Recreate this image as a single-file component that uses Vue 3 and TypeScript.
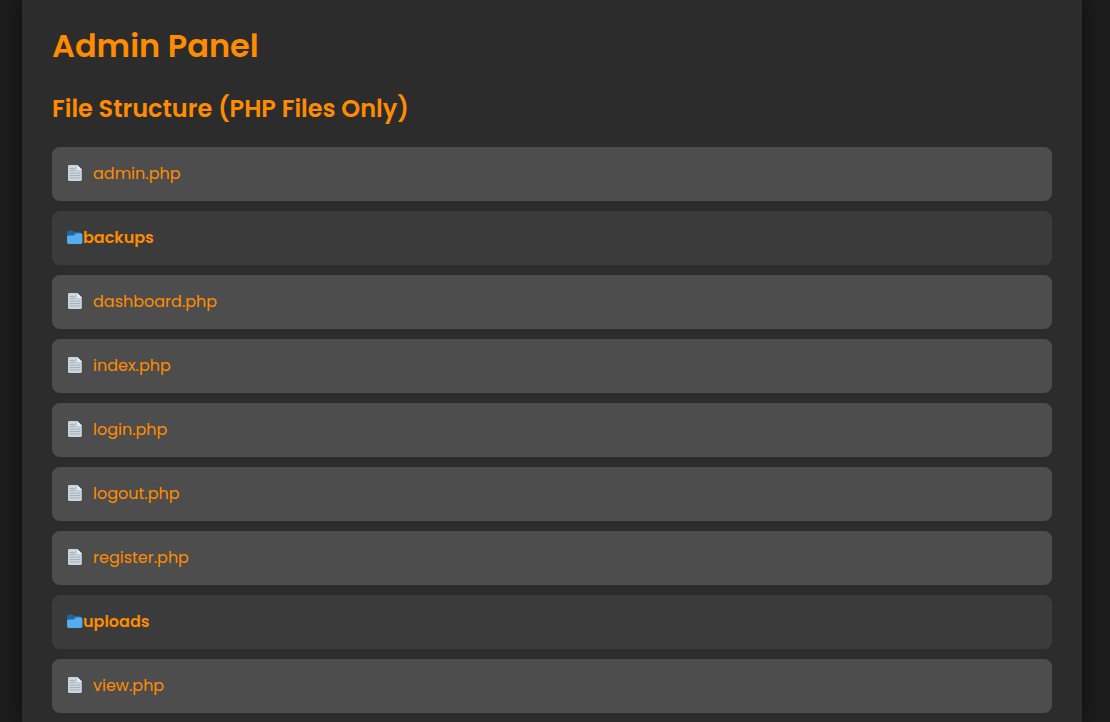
<script setup lang="ts">
interface Entry {
  name: string
  kind: 'file' | 'folder'
}

const entries: Entry[] = [
  { name: 'admin.php', kind: 'file' },
  { name: 'backups', kind: 'folder' },
  { name: 'dashboard.php', kind: 'file' },
  { name: 'index.php', kind: 'file' },
  { name: 'login.php', kind: 'file' },
  { name: 'logout.php', kind: 'file' },
  { name: 'register.php', kind: 'file' },
  { name: 'uploads', kind: 'folder' },
  { name: 'view.php', kind: 'file' },
]
</script>

<template>
  <div class="page">
    <main class="panel">
      <h1>Admin Panel</h1>
      <h2>File Structure (PHP Files Only)</h2>
      <ul class="tree">
        <li v-for="entry in entries" :key="entry.name" :class="['row', entry.kind]">
          <template v-if="entry.kind === 'file'">
            <svg class="icon" viewBox="0 0 16 20" aria-hidden="true">
              <path d="M2.3 1H10l4.8 4.8v9.9a1.3 1.3 0 0 1-1.3 1.3H2.3A1.3 1.3 0 0 1 1 15.700V2.3A1.300 1.300 0 0 1 2.3 1z" fill="#ccd6dd" />
              <path d="M9 1h1l4.800 4.800v.7h-4.500A1.300 1.300 0 0 1 9 5.200z" fill="#a6b5bf" />
              <path d="M9.800 1h.4l4.600 4.600V6h-4a1 1 0 0 1-1-1z" fill="#e9eff3" />
              <path d="M3 4.500h4.500M3 6.500h4.500M3 9h10M3 11.500h10M3 14h10" stroke="#99aab5" stroke-width="0.8" stroke-linecap="round" />
            </svg>
            <a href="#">{{ entry.name }}</a>
          </template>
          <template v-else>
            <svg class="icon" viewBox="0 0 16 20" aria-hidden="true">
              <path d="M0 13V4.200A1.700 1.700 0 0 1 1.700 2.500H4.500c1.700 0 1.800 1.600 3.500 1.600h4.500A1.500 1.500 0 0 1 14 5.600V13z" fill="#226699" />
              <path d="M13.800 5.200H9.500C7.800 5.200 8 7.400 6.200 7.400H1.700A1.700 1.700 0 0 0 0 9.100v5.200A1.700 1.700 0 0 0 1.700 16h12a1.700 1.700 0 0 0 1.700-1.700V6.900A1.700 1.700 0 0 0 13.800 5.200z" fill="#55acee" />
            </svg>
            <strong>{{ entry.name }}</strong>
          </template>
        </li>
      </ul>
    </main>
  </div>
</template>

<style>
body {
  margin: 0;
  background: #1c1c1c;
}
</style>

<style scoped>
.page {
  min-height: 100vh;
  box-sizing: border-box;
  padding: 0 28px 0 22px;
  overflow: hidden;
  background: #1c1c1c;
  color: #ff8c00;
  font-family: Poppins, Inter, "Open Sans", sans-serif;
}

.panel {
  max-width: 1000px;
  min-height: 100vh;
  margin: 0 auto;
  padding: 0 30px;
  background: #2c2c2c;
  box-shadow: 0 0 20px rgba(0, 0, 0, 0.5);
}

.panel::before {
  content: "";
  display: table;
}

h1 {
  margin: 20px 0 0;
  font-size: 32px;
  line-height: 52px;
  font-weight: 600;
}

h2 {
  margin: 20px 0 0;
  font-size: 24px;
  line-height: 34px;
  font-weight: 600;
}

.tree {
  display: flex;
  flex-direction: column;
  gap: 10px;
  margin: 21px 0 0;
  padding: 0 0 9px;
  list-style: none;
}

.row {
  display: flex;
  align-items: center;
  padding: 15px;
  border-radius: 8px;
  font-size: 16px;
  line-height: 24px;
}

.file {
  gap: 10px;
  background: #4d4d4d;
}

.folder {
  background: #3b3b3b;
}

.icon {
  flex: none;
  width: 16px;
  height: 20px;
}

a {
  color: inherit;
  text-decoration: none;
}

strong {
  font-weight: 600;
}
</style>
